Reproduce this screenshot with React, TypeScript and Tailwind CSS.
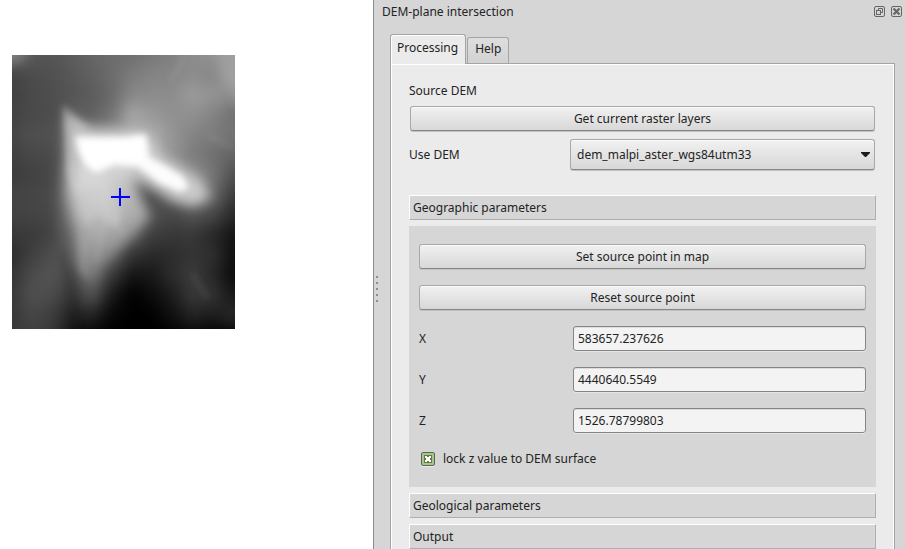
import { useId, useState, type ReactNode } from 'react';

// Coarse grey levels of the terrain, one hex byte for each 20-pixel cell.
const TERRAIN = [
  '78 58 54 5c 66 6c 70 78 80 8c 92 a0',
  '42 4c 50 58 60 6c 7c 84 86 8c 86 a4',
  '40 4a 4e 54 5c 6a 88 8c 8c 9c 94 8c',
  '42 4a 4c 60 60 74 a8 98 90 90 84 70',
  '46 50 50 70 88 98 a8 b0 94 84 7c 74',
  '40 48 48 80 b8 b8 b0 b0 98 7c 70 64',
  '3c 42 46 8c c8 b8 a0 98 a0 98 78 50',
  '44 46 4a 90 d0 c0 84 58 80 98 70 3c',
  '42 44 46 84 c4 b8 90 54 46 54 48 28',
  '38 3a 44 6c b0 98 64 3e 38 38 28 14',
  '2c 40 4e 58 92 68 34 28 2c 34 30 10',
  '34 4c 54 44 78 38 14 18 2c 3c 28 0c',
  '38 50 4c 34 54 18 00 0c 1c 38 34 18',
  '38 46 3e 20 24 06 00 00 10 24 1c 28',
  '38 40 38 10 04 00 00 00 00 08 00 04',
].map((row) => row.split(' '));

function ElevationRaster() {
  return (
    <svg
      width="223"
      height="274"
      viewBox="0 0 223 274"
      className="block overflow-hidden"
      role="img"
      aria-label="Elevation raster with source point"
    >
      <defs>
        <linearGradient id="lobe" x1="0" y1="110" x2="0" y2="235" gradientUnits="userSpaceOnUse">
          <stop offset="0" stopColor="#e0e0e0" />
          <stop offset="0.35" stopColor="#c0c0c0" />
          <stop offset="0.7" stopColor="#989898" />
          <stop offset="1" stopColor="#707070" stopOpacity="0.3" />
        </linearGradient>
        <filter id="soft3" x="-30%" y="-30%" width="160%" height="160%" colorInterpolationFilters="sRGB"><feGaussianBlur stdDeviation="3.4" /></filter>
        <filter id="soft6" x="-30%" y="-30%" width="160%" height="160%" colorInterpolationFilters="sRGB"><feGaussianBlur stdDeviation="6" /></filter>
        <filter id="soft8" x="-60%" y="-60%" width="220%" height="220%" colorInterpolationFilters="sRGB"><feGaussianBlur stdDeviation="8" /></filter>
      </defs>
      <rect width="223" height="274" fill="#404040" />
      <g filter="url(#soft8)">
        <rect x="-50" y="-50" width="330" height="380" fill="#404040" />
        {TERRAIN.map((row, r) =>
          row.map((level, c) => {
            const left = c === 0 ? -40 : c * 20 - 10;
            const top = r === 0 ? -40 : r * 20 - 10;
            const right = c === 11 ? 270 : c * 20 + 11;
            const bottom = r === 14 ? 320 : r * 20 + 11;
            return (
              <rect
                key={`${r}-${c}`}
                x={left}
                y={top}
                width={right - left}
                height={bottom - top}
                fill={`#${level}${level}${level}`}
              />
            );
          }),
        )}
      </g>

      <g filter="url(#soft6)">
        <path d="M-8 -8H18L10 3L-8 8Z" fill="#868686" opacity="0.7" />
        <path d="M204 -8H235V54L218 34L212 12Z" fill="#a0a0a0" opacity="0.7" />
        <path d="M56 112L56 140L65 176L64 208L74 228L86 216L99 200L119 182L138 162L126 138L116 114L90 104Z" fill="url(#lobe)" opacity="0.7" />
        <path d="M124 124L142 136L166 154L164 168L146 160L130 144Z" fill="#444444" opacity="0.45" />
        <path d="M54 56L68 69L86 74L130 76L142 88L148 100L168 112L190 126L198 142L184 150L162 146L138 132L120 119L98 116L84 130L66 138L58 118L56 80Z" fill="#d8d8d8" opacity="0.8" />
      </g>
      <g filter="url(#soft3)">
        <path d="M51 49L60 60L76 72L68 86L66 126L62 136L55 112L53 80Z" fill="#c4c4c4" opacity="0.5" />
        <path d="M62 126L98 120L104 140L110 164L102 174L86 158L74 172L66 160Z" fill="#d8d8d8" opacity="0.3" />
        <path d="M61 140L68 180L66 214L76 226L76 180Z" fill="#a8a8a8" opacity="0.3" />
        <path d="M63 81L88 82L112 82L134 79L137 102L154 111L170 121L177 132L168 137L147 128L126 112L102 110L84 118L73 110L66 96Z" fill="#ffffff" opacity="0.95" />
        <path d="M70 87L132 83V103L98 106L82 114L72 104Z" fill="#ffffff" />
      </g>
      <g filter="url(#soft3)" fill="none" strokeWidth="5" opacity="0.07">
        <path d="M90 122L94 160L84 208" stroke="#ffffff" />
        <path d="M100 156L112 182" stroke="#ffffff" />
        <path d="M48 196L62 244L66 274" stroke="#000000" strokeWidth="7" />
        <path d="M174 0L158 26" stroke="#ffffff" />
        <path d="M180 218L196 244" stroke="#ffffff" />
        <path d="M196 80L222 94" stroke="#ffffff" />
      </g>
      <path d="M99 142H118M108 133V151" stroke="#0000ff" strokeWidth="2" fill="none" shapeRendering="crispEdges" />
    </svg>
  );
}

function FloatIcon() {
  return (
    <svg width="11" height="11" viewBox="0 0 11 11" fill="none" stroke="#666662" className="block">
      <rect x="0.5" y="0.5" width="10" height="10" rx="1.500" />
      <path d="M4.500 4.500V2.500H8.500V6.500H6.500" />
      <rect x="2.500" y="4.500" width="4" height="4" />
    </svg>
  );
}

function CloseIcon() {
  return (
    <svg width="11" height="11" viewBox="0 0 11 11" fill="none" stroke="#666662" className="block">
      <rect x="0.5" y="0.5" width="10" height="10" rx="1.500" />
      <path d="M2.500 2.500L8.500 8.500M8.500 2.500L2.500 8.500" strokeWidth="2.200" />
    </svg>
  );
}

function PushButton({ children }: { children: ReactNode }) {
  return (
    <button
      type="button"
      className="block h-[25px] w-full rounded-[3px] border border-[#a8a8a8] border-b-[#868686] bg-linear-to-b from-[#f1f1f1] to-[#d8d8d8] text-center leading-4 shadow-[0_1px_0_#c2c2c2,inset_0_1px_0_#fbfbfb]"
    >
      {children}
    </button>
  );
}

function SectionHeader({ children }: { children: ReactNode }) {
  return (
    <button
      type="button"
      className="block h-[25px] w-full border border-t-white border-r-[#aeaeae] border-b-[#aeaeae] border-l-white bg-[#d6d6d6] px-[3px] text-left leading-4"
    >
      {children}
    </button>
  );
}

function CoordinateField({ label, initial }: { label: string; initial: string }) {
  const id = useId();
  const [value, setValue] = useState(initial);
  return (
    <div className="flex h-[25px] items-center">
      <label htmlFor={id} className="w-[154px] shrink-0">{label}</label>
      <input
        id={id}
        type="text"
        value={value}
        onChange={(e) => setValue(e.target.value)}
        className="h-[25px] min-w-0 flex-1 rounded-[3px] border border-[#858585] bg-[#f3f3f3] px-1 leading-4 shadow-[0_1px_0_#e6e6e6,inset_0_1px_0_#dcdcdc] outline-none"
      />
    </div>
  );
}

export default function App() {
  const [locked, setLocked] = useState(true);
  return (
    <div className="flex h-screen overflow-hidden bg-white font-['Noto_Sans',sans-serif] text-[12px] leading-4 text-[#232323]">
      <main className="w-[373px] shrink-0 pt-[55px] pl-3">
        <ElevationRaster />
      </main>

      <aside className="flex min-w-0 flex-1 border-l border-[#8c8c8c] bg-[#d6d6d6]">
        <div className="flex w-4 shrink-0 flex-col gap-1 pt-[276px] pl-[2px]" aria-hidden="true">
          <span className="size-[2px] bg-[#8e8e8e]" />
          <span className="size-[2px] bg-[#8e8e8e]" />
          <span className="size-[2px] bg-[#8e8e8e]" />
          <span className="size-[2px] bg-[#8e8e8e]" />
          <span className="size-[2px] bg-[#8e8e8e]" />
        </div>

        <div className="flex min-w-0 flex-1 flex-col pr-[10px]">
          <header className="-mr-[7px] -ml-2 flex h-[34px] items-start justify-between pt-1">
            <h1>DEM-plane intersection</h1>
            <div className="flex gap-[6px] pt-[2px]">
              <button type="button" aria-label="Float panel"><FloatIcon /></button>
              <button type="button" aria-label="Close panel"><CloseIcon /></button>
            </div>
          </header>

          <div role="tablist" className="relative -mb-px flex items-end gap-px">
            <button
              type="button"
              role="tab"
              aria-selected="true"
              className="h-[30px] rounded-t-[3px] border border-b-0 border-[#a4a4a4] bg-[#ebebeb] pr-[7px] pb-[3px] pl-[6px] shadow-[inset_1px_1px_0_#ffffff]"
            >
              Processing
            </button>
            <button
              type="button"
              role="tab"
              aria-selected="false"
              className="mb-px h-[26px] rounded-t-[3px] border border-b-0 border-[#a4a4a4] bg-linear-to-b from-[#dedede] to-[#d2d2d2] px-[7px] pb-[3px]"
            >
              Help
            </button>
          </div>

          <section
            role="tabpanel"
            className="flex-1 border border-b-0 border-[#a4a4a4] bg-[#ebebeb] pt-[19px] pr-[18px] pl-[18px] shadow-[inset_1px_1px_0_#ffffff,inset_-1px_0_0_#ffffff]"
          >
            <h2>Source DEM</h2>
            <div className="mt-[7px] px-px">
              <PushButton>Get current raster layers</PushButton>
            </div>
            <div className="mt-2 flex items-center pr-px">
              <label htmlFor="dem" className="w-[161px] shrink-0">Use DEM</label>
              <div className="relative min-w-0 flex-1">
                <select
                  id="dem"
                  className="block h-[31px] w-full appearance-none rounded-[3px] border border-[#a8a8a8] border-b-[#868686] bg-linear-to-b from-[#f1f1f1] to-[#d8d8d8] pr-6 pl-[6px] leading-4 shadow-[0_1px_0_#c2c2c2,inset_0_1px_0_#fbfbfb] outline-none"
                >
                  <option>dem_malpi_aster_wgs84utm33</option>
                </select>
                <svg width="9" height="6" viewBox="0 0 9 6" className="pointer-events-none absolute top-[13px] right-[5px]" aria-hidden="true">
                  <path d="M0 0H9V1L5 5H4L0 1Z" fill="#1c1c1c" />
                </svg>
              </div>
            </div>

            <div className="mt-[25px] flex flex-col gap-[6px]">
              <SectionHeader>Geographic parameters</SectionHeader>
              <div className="flex flex-col gap-4 bg-[#d6d6d6] px-[10px] pt-[18px] pb-5">
                <PushButton>Set source point in map</PushButton>
                <PushButton>Reset source point</PushButton>
                <CoordinateField label="X" initial="583657.237626" />
                <CoordinateField label="Y" initial="4440640.5549" />
                <CoordinateField label="Z" initial="1526.78799803" />
                <label className="flex items-center gap-2 pt-[2px] pl-[2px]">
                  <span className="relative block size-[14px]">
                    <input
                      type="checkbox"
                      checked={locked}
                      onChange={(e) => setLocked(e.target.checked)}
                      className="block size-[14px] appearance-none rounded-[2px] border border-[#5c6650] bg-[#f3f3f3] shadow-[0_1px_0_#ececec] checked:bg-[#a5c785]"
                    />
                    {locked && (
                      <svg width="14" height="14" viewBox="0 0 14 14" className="pointer-events-none absolute inset-0" aria-hidden="true">
                        <rect x="3" y="3" width="8" height="8" fill="#64784f" />
                        <path d="M4 4h2v1h2v-1h2v2h-1v2h1v2h-2v-1h-2v1h-2v-2h1v-2h-1z" fill="#ffffff" />
                      </svg>
                    )}
                  </span>
                  lock z value to DEM surface
                </label>
              </div>
              <SectionHeader>Geological parameters</SectionHeader>
              <SectionHeader>Output</SectionHeader>
            </div>
          </section>
        </div>
      </aside>
    </div>
  );
}
